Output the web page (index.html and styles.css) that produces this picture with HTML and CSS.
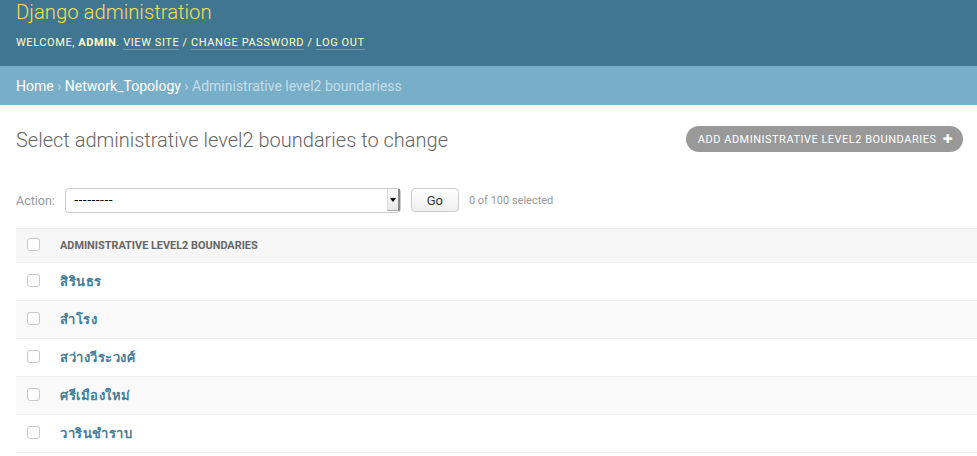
FILE: index.html
```html
<!DOCTYPE html>
<html>
<head>
<meta charset="utf-8">
<link rel="stylesheet" href="styles.css">
</head>
<body>
<div class="header">
  <h1 class="branding">Django administration</h1>
  <div class="user-tools">Welcome, <strong>admin</strong>. <a href="#">View site</a> / <a href="#">Change password</a> / <a href="#">Log out</a></div>
</div>
<div class="breadcrumbs"><a href="#">Home</a> › <a href="#">Network_Topology</a> › Administrative level2 boundariess</div>
<div class="content">
  <div class="title-row">
    <h1 class="page-title">Select administrative level2 boundaries to change</h1>
    <a class="addlink" href="#">Add administrative level2 boundaries <span class="plus">✚</span></a>
  </div>
  <div class="actions">
    <label class="action-label">Action:</label>
    <div class="select-wrap">
      <select class="action-select"><option>---------</option></select>
      <span class="select-arrow"></span>
    </div>
    <button class="go">Go</button>
    <span class="counter">0 of 100 selected</span>
  </div>
  <div class="results">
    <div class="row head"><span class="cb"></span><span class="col-title">Administrative level2 boundaries</span></div>
    <div class="row"><span class="cb"></span><a class="name" href="#">สิรินธร</a></div>
    <div class="row alt"><span class="cb"></span><a class="name" href="#">สำโรง</a></div>
    <div class="row"><span class="cb"></span><a class="name" href="#">สว่างวีระวงศ์</a></div>
    <div class="row alt"><span class="cb"></span><a class="name" href="#">ศรีเมืองใหม่</a></div>
    <div class="row"><span class="cb"></span><a class="name" href="#">วารินชำราบ</a></div>
  </div>
</div>
</body>
</html>
```
FILE: styles.css
```css
html, body { margin: 0; padding: 0; }
body {
  font-family: Roboto, "Noto Sans", "DejaVu Sans", sans-serif;
  color: #333;
  background: #fff;
  font-size: 14px;
  overflow: hidden;
}
a { text-decoration: none; }
.header {
  background: #417690;
  color: #ffc;
  padding: 0 16px;
  height: 66px;
  box-sizing: border-box;
  padding-top: 0;
}
.branding {
  margin: 0;
  font-size: 20.3px;
  font-weight: 300;
  color: #f5dd5d;
  line-height: 24px;
}
.user-tools {
  margin-top: 12px;
  font-size: 11px;
  letter-spacing: 0.58px;
  text-transform: uppercase;
  line-height: 14px;
}
.user-tools strong { font-weight: 700; }
.user-tools a {
  color: #ffc;
  border-bottom: 1px solid rgba(255,255,255,0.25);
  padding-bottom: 0px;
}
.breadcrumbs {
  background: #79aec8;
  color: #c4dce8;
  height: 39px;
  line-height: 41px;
  padding: 0 16px;
  font-size: 14px;
}
.breadcrumbs a { color: #fff; }
.content { padding: 0 14px 0 16px; }
.title-row {
  display: flex;
  justify-content: space-between;
  align-items: center;
  margin-top: 21px;
  height: 26px;
}
.page-title {
  margin: 0;
  margin-top: 2px;
  font-size: 20px;
  font-weight: 300;
  color: #666;
}
.addlink {
  display: inline-flex;
  align-items: center;
  height: 26px;
  padding: 0 10px 0 12px;
  background: #999;
  border-radius: 15px;
  color: #fff;
  font-size: 11px;
  text-transform: uppercase;
  letter-spacing: 0.5px;
}
.plus { margin-left: 6px; font-size: 12px; }
.actions {
  display: flex;
  align-items: center;
  margin-top: 36px;
  height: 24px;
}
.action-label { color: #999; font-size: 12.5px; margin-right: 10px; }
.select-wrap { position: relative; }
.action-select {
  appearance: none;
  -webkit-appearance: none;
  width: 336px;
  height: 25px;
  border: 1px solid #ccc;
  border-radius: 4px;
  background: #fff;
  font-family: "DejaVu Sans", sans-serif;
  font-size: 12px;
  padding: 0 8px;
  color: #000;
  display: block;
}
.select-arrow {
  position: absolute;
  right: 1px;
  top: 1px;
  width: 10px;
  height: 21px;
  background: linear-gradient(#f8f8f8, #e8e8e8);
  border-left: 1px solid #ddd;
  border-right: 2px solid #888;
  border-bottom: 1px solid #aaa;
}
.select-arrow::after {
  content: "";
  position: absolute;
  left: 2px;
  top: 9px;
  border-left: 3px solid transparent;
  border-right: 3px solid transparent;
  border-top: 4px solid #000;
}
.go {
  margin-left: 10px;
  width: 48px;
  height: 24px;
  border: 1px solid #ccc;
  border-radius: 4px;
  background: linear-gradient(#fff, #f0f0f0);
  font-family: Roboto, sans-serif;
  font-size: 13px;
  color: #333;
  padding: 0;
}
.counter { margin-left: 10px; font-size: 11px; color: #999; }
.results { margin-top: 16px; margin-right: -14px; }
.row {
  display: flex;
  align-items: center;
  height: 38px;
  border-bottom: 1px solid #eee;
  box-sizing: border-box;
}
.row.head {
  height: 35px;
  background: #f6f6f6;
  border-top: 1px solid #eee;
  border-bottom: 1px solid #eee;
}
.row.alt { background: #f9f9f9; }
.cb {
  width: 11px;
  height: 11px;
  border: 1px solid #c8c8c8;
  border-radius: 3px;
  background: #fff;
  margin-left: 11px;
  margin-right: 20px;
  flex: none;
}
.row.head .cb { margin-top: -2px; }
.row:not(.head) .cb { margin-top: -2px; }
.col-title {
  font-size: 10.9px;
  font-weight: 700;
  color: #666;
  text-transform: uppercase;
}
.name {
  color: #447e9b;
  font-weight: 700;
  font-size: 13px;
  letter-spacing: 0.5px;
}
```
